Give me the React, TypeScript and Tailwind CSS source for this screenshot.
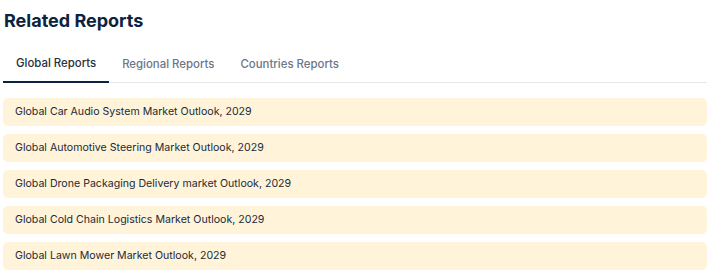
import React from "react";

const items = [
  "Global Car Audio System Market Outlook, 2029",
  "Global Automotive Steering Market Outlook, 2029",
  "Global Drone Packaging Delivery market Outlook, 2029",
  "Global Cold Chain Logistics Market Outlook, 2029",
  "Global Lawn Mower Market Outlook, 2029",
];

const tabs = ["Global Reports", "Regional Reports", "Countries Reports"];

export default function App() {
  return (
    <div className="w-[712px] h-[279px] bg-white font-['Inter',sans-serif]">
      <div className="ml-[3px] w-[704px] pt-[9px]">
        <h2 className="pl-[1px] text-[18px] leading-[24px] font-bold text-[#0c2340]">Related Reports</h2>
        <div className="mt-[15px] flex border-b border-[#e5e7eb]">
          {tabs.map((t, i) => (
            <div
              key={t}
              className={
                i === 0
                  ? "px-[13px] h-[35px] -mb-px pb-px flex items-center text-[11.4px] font-medium text-[#27303f] border-b-2 border-[#0c2340]"
                  : "px-[13px] h-[34px] flex items-center text-[11.4px] font-medium text-[#6b7689]"
              }
            >
              {t}
            </div>
          ))}
        </div>
        <div className="mt-[15px] flex flex-col gap-[8px]">
          {items.map((t) => (
            <div key={t} className="h-[28px] flex items-center px-[12px] rounded-[5px] bg-[#fff4da] text-[10.6px] text-[#222a36]">
              {t}
            </div>
          ))}
        </div>
      </div>
    </div>
  );
}
